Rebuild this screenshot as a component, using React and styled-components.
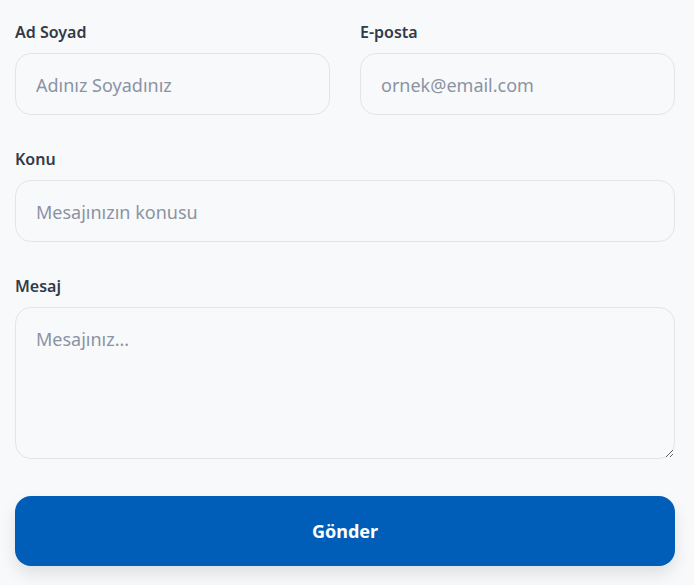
import React from 'react';
import styled, { createGlobalStyle } from 'styled-components';

const GlobalStyle = createGlobalStyle`
  body {
    margin: 0;
    background: #f8f9fb;
    font-family: "Noto Sans", "Open Sans", Arial, sans-serif;
  }
`

const Form = styled.form`
  width: 660px;
  padding: 20px 15px;
  display: flex;
  flex-direction: column;
  gap: 32px;
`

const Row = styled.div`
  display: grid;
  grid-template-columns: ${({ cols }) => cols === 2 ? '1fr 1fr' : '1fr'};
  column-gap: 30px;
`

const Field = styled.label`
  display: flex;
  flex-direction: column;
  gap: 9px;
`

const LabelText = styled.span`
  font-size: 16px;
  line-height: 24px;
  font-weight: 600;
  color: #333a48;
`

const inputBase = `
  box-sizing: border-box;
  width: 100%;
  border: 1px solid #e3e5ea;
  border-radius: 16px;
  background: #f8f9fb;
  font-family: "Noto Sans", "Open Sans", Arial, sans-serif;
  font-size: 18px;
  color: #2d3340;
  padding: 0 20px;
  outline: none;
  &::placeholder {
    color: #8b93a3;
  }
`

const Input = styled.input`
  ${inputBase}
  height: 62px;
  padding-top: 2px;
`

const TextArea = styled.textarea`
  ${inputBase}
  height: 152px;
  padding-top: 18px;
  resize: vertical;
  line-height: 26px;
`

const SubmitButton = styled.button`
  margin-top: 5px;
  height: 70px;
  border: none;
  border-radius: 16px;
  background: #005eb8;
  color: #fff;
  font-family: "Noto Sans", "Open Sans", Arial, sans-serif;
  font-size: 18px;
  font-weight: 700;
  cursor: pointer;
  box-shadow: 0 8px 16px rgba(0, 0, 0, 0.1);
`

export default function App() {
  return (
    <>
      <GlobalStyle />
      <Form onSubmit={(e) => e.preventDefault()}>
        <Row cols={2}>
          <Field>
            <LabelText>Ad Soyad</LabelText>
            <Input placeholder="Adınız Soyadınız" />
          </Field>
          <Field>
            <LabelText>E-posta</LabelText>
            <Input type="email" placeholder="ornek@email.com" />
          </Field>
        </Row>
        <Row>
          <Field>
            <LabelText>Konu</LabelText>
            <Input placeholder="Mesajınızın konusu" />
          </Field>
        </Row>
        <Row>
          <Field>
            <LabelText>Mesaj</LabelText>
            <TextArea placeholder="Mesajınız..." />
          </Field>
        </Row>
        <SubmitButton type="submit">Gönder</SubmitButton>
      </Form>
    </>
  )
}
